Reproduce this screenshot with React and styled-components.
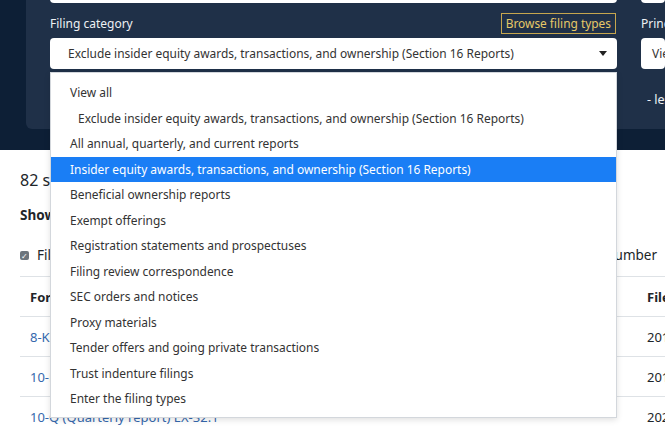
import React from 'react'
import styled, { createGlobalStyle } from 'styled-components'

const GlobalStyle = createGlobalStyle`
  html, body {
    margin: 0;
    padding: 0;
    background: #fff;
  }
  body {
    font-family: "Noto Sans", "Open Sans", sans-serif;
    color: #212529;
    overflow: hidden;
  }
`

const Page = styled.div`
  width: 665px;
  height: 431px;
  overflow: hidden;
  position: relative;
  background: #fff;
`

const Hero = styled.div`
  background: #0d1f36;
  height: 150px;
  padding-left: 26px;
`

const Panel = styled.div`
  background: #1f3048;
  height: 129px;
  border-bottom-left-radius: 6px;
  padding-left: 24px;
  display: grid;
  grid-template-columns: 567px 1fr;
  column-gap: 24px;
`

const Column = styled.div`
  display: flex;
  flex-direction: column;
  min-width: 0;
`

const Field = styled.div`
  background: #fff;
  border-radius: 4px;
  height: 31px;
  margin-top: ${p => p.$offset || 0}px;
  display: flex;
  align-items: center;
  padding-left: ${p => p.$pad || 18}px;
  font-size: 11.95px;
  color: #333;
  white-space: nowrap;
  overflow: hidden;
`

const LabelRow = styled.div`
  margin-top: 9px;
  height: 22px;
  display: flex;
  align-items: center;
  justify-content: space-between;
`

const Label = styled.label`
  color: #eef1f4;
  font-size: 12px;
  white-space: nowrap;
`

const BrowseButton = styled.button`
  background: transparent;
  border: 1px solid #c6a64e;
  color: #e7c867;
  font-family: inherit;
  font-size: 11.9px;
  height: 21px;
  padding: 0 4px;
  margin-right: 1px;
  cursor: pointer;
`

const SelectWrap = styled.div`
  position: relative;
  margin-top: 4px;
`

const Caret = styled.svg`
  position: absolute;
  right: 10px;
  top: 13px;
`

const Menu = styled.ul`
  position: absolute;
  top: calc(100% + 3px);
  left: 0;
  right: 0;
  margin: 0;
  padding: 7px 0 5px;
  list-style: none;
  background: #fff;
  border: 1px solid #d3d7dc;
  box-shadow: 0 2px 6px rgba(0, 0, 0, 0.12);
  z-index: 10;
`

const MenuItem = styled.li`
  height: 25.5px;
  line-height: 25.5px;
  padding-left: ${p => (p.$indent ? 27 : 19)}px;
  font-size: 11.95px;
  white-space: nowrap;
  color: ${p => (p.$active ? '#fff' : '#333')};
  background: ${p => (p.$active ? '#1a7ef5' : 'transparent')};
`

const Hint = styled.div`
  color: #eef1f4;
  font-size: 12.5px;
  margin-top: 22px;
  padding-left: 6px;
  white-space: nowrap;
`

const Results = styled.div`
  padding: 18px 8px 0 20px;
`

const Count = styled.div`
  font-size: 16px;
  line-height: 24px;
  white-space: nowrap;
`

const SubHeading = styled.div`
  font-size: 13.5px;
  font-weight: 700;
  margin-top: 14px;
  white-space: nowrap;
`

const ToggleRow = styled.div`
  display: flex;
  align-items: center;
  margin-top: 21px;
  height: 20px;
  font-size: 13.5px;
  white-space: nowrap;
`

const Toggle = styled.label`
  display: flex;
  align-items: center;
  gap: 8px;
  margin-left: ${p => (p.$end ? 'auto' : '0')};
`

const Box = styled.span`
  width: 9px;
  height: 9px;
  border-radius: 2px;
  background: #6c757d;
  color: #fff;
  font-size: 8px;
  line-height: 9px;
  text-align: center;
`

const Table = styled.div`
  margin-top: 11px;
  width: 740px;
`

const Row = styled.div`
  display: grid;
  grid-template-columns: 617px 1fr;
  height: 39px;
  align-items: center;
  border-top: 1px solid #dee2e6;
  font-size: 13px;
  font-weight: ${p => (p.$head ? 700 : 400)};
`

const Cell = styled.div`
  padding-left: 10px;
  white-space: nowrap;
`

const DocLink = styled.a`
  color: #3568ad;
  text-decoration: none;
`

const categories = [
  { label: 'View all' },
  { label: 'Exclude insider equity awards, transactions, and ownership (Section 16 Reports)', indent: true },
  { label: 'All annual, quarterly, and current reports' },
  { label: 'Insider equity awards, transactions, and ownership (Section 16 Reports)', active: true },
  { label: 'Beneficial ownership reports' },
  { label: 'Exempt offerings' },
  { label: 'Registration statements and prospectuses' },
  { label: 'Filing review correspondence' },
  { label: 'SEC orders and notices' },
  { label: 'Proxy materials' },
  { label: 'Tender offers and going private transactions' },
  { label: 'Trust indenture filings' },
  { label: 'Enter the filing types' },
]

const filings = [
  { form: '8-K (Current report) EX-99.1', filed: '2019-11-07' },
  { form: '10-K (Annual report) EX-32.1', filed: '2019-02-28' },
  { form: '10-Q (Quarterly report) EX-32.1', filed: '2020-05-06' },
]

export default function App() {
  return (
    <Page>
      <GlobalStyle />
      <Hero>
        <Panel>
          <Column>
            <Field $offset={-28} />
            <LabelRow>
              <Label>Filing category</Label>
              <BrowseButton>Browse filing types</BrowseButton>
            </LabelRow>
            <SelectWrap>
              <Field>Exclude insider equity awards, transactions, and ownership (Section 16 Reports)</Field>
              <Caret width="8" height="5" viewBox="0 0 8 5">
                <path d="M0 0h8L4 5z" fill="#222" />
              </Caret>
              <Menu>
                {categories.map(c => (
                  <MenuItem key={c.label} $indent={c.indent} $active={c.active}>
                    {c.label}
                  </MenuItem>
                ))}
              </Menu>
            </SelectWrap>
          </Column>
          <Column>
            <Field $offset={-28} />
            <LabelRow>
              <Label>Principal executive offices in</Label>
            </LabelRow>
            <SelectWrap>
              <Field $pad={11}>View all</Field>
            </SelectWrap>
            <Hint>- less</Hint>
          </Column>
        </Panel>
      </Hero>
      <Results>
        <Count>82 search results</Count>
        <SubHeading>Show columns:</SubHeading>
        <ToggleRow>
          <Toggle>
            <Box>✓</Box>
            Filed
          </Toggle>
          <Toggle $end>
            <Box>✓</Box>
            File number
          </Toggle>
        </ToggleRow>
        <Table>
          <Row $head>
            <Cell>Form &amp; File</Cell>
            <Cell>Filed</Cell>
          </Row>
          {filings.map(f => (
            <Row key={f.form}>
              <Cell>
                <DocLink href="#">{f.form}</DocLink>
              </Cell>
              <Cell>{f.filed}</Cell>
            </Row>
          ))}
        </Table>
      </Results>
    </Page>
  )
}
